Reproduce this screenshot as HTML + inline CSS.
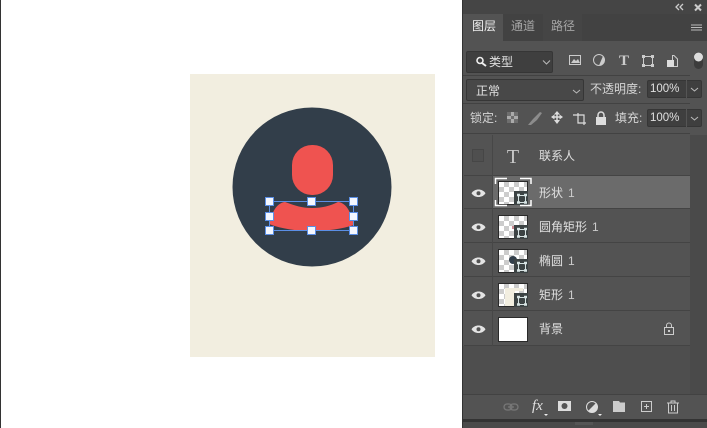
<!DOCTYPE html>
<html><head><meta charset="utf-8">
<style>
html,body{margin:0;padding:0;width:707px;height:428px;overflow:hidden;background:#fff}
body{position:relative;font-family:"Liberation Sans","Noto Sans CJK SC",sans-serif;color:#ddd}
div{position:absolute;box-sizing:border-box}
.t{font-size:12px;line-height:14px;white-space:nowrap;color:#e0e0e0}
.t span{color:#ccc;margin-left:5px}
.box{background:#3f3f3f;border:1px solid #363636;border-radius:2px}
.sep{left:463px;width:227px;height:1px;background:#424242}
.row{left:464px;width:226px;background:#535353;border-bottom:1px solid #444}
.thumb{left:498px;width:30px;height:24px;border:1px solid #2a2a2a;background-color:#fff;background-image:conic-gradient(#ccc 25%,#fff 0 50%,#ccc 0 75%,#fff 0);background-size:10px 10px;overflow:hidden}
.mask{left:514px;width:14px;height:14px;background:#3c4344}
</style></head><body>
<div style="left:0;top:0;width:1px;height:428px;background:#333"></div>
<svg style="position:absolute;left:0;top:0" width="462" height="428">
<rect x="190" y="74" width="245" height="283" fill="#f2eee0"/>
<circle cx="312" cy="187" r="79.500" fill="#323e4a"/>
<rect x="292" y="145" width="41" height="50" rx="20" fill="#ef5350"/>
<path d="M269 224C272 213 276 203 285 202C296 206 302 208 312 208C322 208 330 206 338 202C347 203 351 213 354 225C342 229 327 231 312 231C297 231 282 229 269 224Z" fill="#ef5350"/>
<rect x="269.500" y="201.500" width="84" height="29" fill="none" stroke="#5b8fe6" stroke-width="1"/>
<g fill="#f4f7ff" stroke="#5b8fe6" stroke-width="1">
<rect x="265.500" y="197.500" width="8" height="8"/><rect x="307.500" y="197.500" width="8" height="8"/><rect x="349.500" y="197.500" width="8" height="8"/>
<rect x="265.500" y="212.500" width="8" height="8"/><rect x="349.500" y="212.500" width="8" height="8"/>
<rect x="265.500" y="226.500" width="8" height="8"/><rect x="307.500" y="226.500" width="8" height="8"/><rect x="349.500" y="226.500" width="8" height="8"/>
</g>
</svg>

<!-- panel -->
<div style="left:462px;top:0;width:245px;height:428px;background:#535353;border-left:1px solid #333"></div>
<div style="left:463px;top:0;width:244px;height:14px;background:#454545"></div>
<div style="left:463px;top:14px;width:244px;height:27px;background:#424242"></div>
<div style="left:463px;top:14px;width:40px;height:28px;background:#535353"></div>
<div style="left:543px;top:14px;width:39px;height:27px;background:#454545"></div>
<div class="t" style="left:472px;top:19px;color:#eee">图层</div>
<div class="t" style="left:511px;top:19px;color:#a5a5a5">通道</div>
<div class="t" style="left:551px;top:19px;color:#a5a5a5">路径</div>
<svg style="position:absolute;left:463px;top:0" width="244" height="45">
<g fill="none" stroke="#ccc" stroke-width="1.300"><path d="M216 4L213 7L216 10M220 4L217 7L220 10"/><path d="M232 4.500L238 10.500M238 4.500L232 10.500" stroke-width="2"/></g>
<path d="M228 25H239M228 27.500H239M228 30H239" stroke="#bbb" stroke-width="1"/>
</svg>

<!-- filter row -->
<div class="box" style="left:466px;top:51px;width:87px;height:22px"></div>
<svg style="position:absolute;left:463px;top:45px" width="244" height="35">
<circle cx="17" cy="15.500" r="3" fill="none" stroke="#eee" stroke-width="1.600"/><path d="M19 18L23 21" stroke="#eee" stroke-width="2"/>
<path d="M80 15.500L83.500 19L87 15.500" fill="none" stroke="#bbb"/>
<rect x="106.500" y="10.500" width="11" height="9" fill="none" stroke="#ccc"/><path d="M108 18L111 14L113 16L115 14L117 18Z" fill="#ccc"/>
<circle cx="136" cy="15" r="5.500" fill="#555" stroke="#ccc"/><path d="M136 20.500A5.500 5.500 0 0 0 140 11Z" fill="#ccc"/>
<text x="161" y="20" font-family="Liberation Serif" font-weight="bold" font-size="15" fill="#ccc" text-anchor="middle">T</text>
<rect x="180.500" y="11.500" width="9" height="9" fill="none" stroke="#ccc"/>
<g fill="#ccc"><rect x="179" y="10" width="3" height="3"/><rect x="188" y="10" width="3" height="3"/><rect x="179" y="19" width="3" height="3"/><rect x="188" y="19" width="3" height="3"/></g>
<path d="M209.500 10.500H211L214.500 14V21.500H209.500Z" fill="none" stroke="#ccc"/><rect x="204" y="15" width="7" height="7" fill="#ddd"/>
<rect x="231" y="7" width="9" height="17" rx="4.500" fill="#3c3c3c"/><circle cx="235.500" cy="12" r="4.500" fill="#ddd"/>
</svg>
<div class="t" style="left:489px;top:55px">类型</div>

<div class="sep" style="top:75px"></div>
<!-- blend row -->
<div class="box" style="left:466px;top:79px;width:118px;height:22px;background:#484848"></div>
<div class="t" style="left:476px;top:84px">正常</div>
<div class="t" style="left:590px;top:82px;color:#d5d5d5">不透明度:</div>
<div class="box" style="left:647px;top:80px;width:55px;height:18px"></div>
<div style="left:686px;top:80px;width:1px;height:18px;background:#555"></div>
<div class="t" style="left:650px;top:82px;font-size:11.500px">100%</div>
<div class="sep" style="top:103px"></div>
<!-- lock row -->
<div class="t" style="left:470px;top:111px;color:#d5d5d5">锁定:</div>
<div class="t" style="left:615px;top:111px;color:#d5d5d5">填充:</div>
<div class="box" style="left:647px;top:109px;width:55px;height:18px"></div>
<div style="left:686px;top:109px;width:1px;height:18px;background:#555"></div>
<div class="t" style="left:650px;top:111px;font-size:11.500px">100%</div>
<svg style="position:absolute;left:463px;top:78px" width="244" height="55">
<path d="M110 12L113.500 15L117 12" fill="none" stroke="#bbb"/>
<path d="M228 10L231.500 13L235 10M228 39L231.500 42L235 39" fill="none" stroke="#bbb"/>
<rect x="44" y="34" width="11" height="11" fill="#aaa"/><path d="M44 34h4v4h-4zM51 34h4v4h-4zM48 38h3v3h-3zM44 41h4v4h-4zM51 41h4v4h-4z" fill="#6e6e6e"/>
<path d="M65 47L70 41L77 34L79 35L74 42L68 47Z" fill="#8c8c8c"/>
<path d="M94 35V43M90 39H98" stroke="#ddd" stroke-width="1.500"/>
<path d="M94 33L97 36.500H91ZM94 46L97 42H91ZM88 39L91.500 36.500V41.500ZM100 39L96.500 36.500V41.500Z" fill="#ddd"/>
<path d="M110 37H121V47M115 35V45H123" fill="none" stroke="#ddd" stroke-width="1.200"/>
<rect x="133" y="39" width="10" height="8" fill="#ddd"/><path d="M135 39V37A3 3 0 0 1 141 37V39" fill="none" stroke="#ddd" stroke-width="1.500"/>
</svg>
<div class="sep" style="top:133px"></div>

<!-- layers -->
<div style="left:463px;top:346px;width:244px;height:48px;background:#4e4e4e"></div>
<div style="left:690px;top:135px;width:17px;height:259px;background:#4a4a4a"></div>
<div class="row" style="top:135px;height:41px"></div>
<div class="row" style="top:176px;height:33px"></div>
<div style="left:493px;top:176px;width:197px;height:32px;background:#6b6b6b"></div>
<div class="row" style="top:209px;height:34px"></div>
<div class="row" style="top:243px;height:34px"></div>
<div class="row" style="top:277px;height:34px"></div>
<div class="row" style="top:311px;height:35px"></div>
<div style="left:492px;top:135px;width:1px;height:211px;background:#474747"></div>
<div style="left:472px;top:149px;width:12px;height:13px;border:1px solid #464646;background:#4f4f4f"></div>
<svg style="position:absolute;left:463px;top:135px" width="244" height="211">
<g transform="translate(-0.500,-0.800)">
<path d="M9 59C12 54 20 54 23 59C20 64 12 64 9 59Z" fill="#e4e4e4"/><circle cx="16" cy="59" r="2" fill="#535353"/>
<path d="M9 93C12 88 20 88 23 93C20 98 12 98 9 93Z" fill="#e4e4e4"/><circle cx="16" cy="93" r="2" fill="#535353"/>
<path d="M9 127C12 122 20 122 23 127C20 132 12 132 9 127Z" fill="#e4e4e4"/><circle cx="16" cy="127" r="2" fill="#535353"/>
<path d="M9 161C12 156 20 156 23 161C20 166 12 166 9 161Z" fill="#e4e4e4"/><circle cx="16" cy="161" r="2" fill="#535353"/>
<path d="M9 195C12 190 20 190 23 195C20 200 12 200 9 195Z" fill="#e4e4e4"/><circle cx="16" cy="195" r="2" fill="#535353"/>
</g>
<text x="50" y="28" font-family="Liberation Serif" font-size="20" fill="#c8c8c8" text-anchor="middle">T</text>
</svg>
<div class="t" style="left:539px;top:149px">联系人</div>

<div class="thumb" style="top:181px"></div>
<div class="thumb" style="top:215px"></div>
<div class="thumb" style="top:249px"></div>
<div class="thumb" style="top:283px"></div>
<div class="thumb" style="top:317px;background:#fff;height:25px"></div>
<div style="left:512px;top:226px;width:3px;height:3px;background:#c98a92"></div>
<div style="left:509px;top:256px;width:8px;height:8px;border-radius:50%;background:#323e4a"></div>
<div style="left:505px;top:288px;width:18px;height:3px;background:#f2eee0"></div>
<div style="left:505px;top:288px;width:10px;height:18px;background:#f2eee0"></div>
<div class="mask" style="top:191px"></div>
<div class="mask" style="top:225px"></div>
<div class="mask" style="top:259px"></div>
<div class="mask" style="top:293px"></div>
<svg style="position:absolute;left:514px;top:190px" width="16" height="125" fill="none" stroke="#d8e4e4">
<g id="m"><rect x="4.500" y="5.500" width="7" height="7"/><path d="M3 5h3M10 5h3M3 12.500h3M10 12.500h3" stroke-width="2.500"/></g>
<use href="#m" y="34"/><use href="#m" y="68"/><use href="#m" y="102"/>
</svg>
<svg style="position:absolute;left:493px;top:176px" width="42" height="34" fill="none" stroke="#fff" stroke-width="1.500">
<path d="M14 2.500H2.500V8M27 2.500H38V8M2.500 24V29.500H14M27 29.500H38V24"/>
</svg>
<div class="t" style="left:539px;top:186px">形状<span>1</span></div>
<div class="t" style="left:539px;top:220px">圆角矩形<span>1</span></div>
<div class="t" style="left:539px;top:254px">椭圆<span>1</span></div>
<div class="t" style="left:539px;top:288px">矩形<span>1</span></div>
<div class="t" style="left:539px;top:322px">背景</div>
<svg style="position:absolute;left:662px;top:322px" width="14" height="14" fill="none" stroke="#ccc">
<rect x="2.500" y="5.500" width="9" height="7"/><path d="M4.500 5.500V3.500A2.500 2.500 0 0 1 9.500 3.500V5.500"/><rect x="6" y="8" width="2" height="2" fill="#ccc" stroke="none"/>
</svg>

<!-- bottom -->
<div style="left:463px;top:394px;width:244px;height:1px;background:#424242"></div>
<div style="left:463px;top:419px;width:244px;height:3px;background:#333"></div>
<div style="left:463px;top:422px;width:244px;height:6px;background:#4a4a4a"></div>
<div style="left:575px;top:422px;width:18px;height:3px;background:#555"></div>
<div class="t" style="left:532px;top:399px;font-family:'Liberation Serif',serif;font-style:italic;font-size:15px">fx</div>
<svg style="position:absolute;left:463px;top:395px" width="244" height="24">
<g fill="none" stroke="#777" stroke-width="1.300"><rect x="41" y="9" width="8" height="6" rx="3"/><rect x="47" y="9" width="8" height="6" rx="3"/><path d="M45 12H51"/></g>
<path d="M81 19h4l-2 2z" fill="#eee"/>
<rect x="95" y="6" width="13" height="10" fill="#ddd"/><circle cx="101.500" cy="11" r="3" fill="#555"/>
<circle cx="129" cy="12" r="5.500" fill="#555" stroke="#ddd"/><path d="M125 16A5.500 5.500 0 0 0 133 8Z" fill="#ddd"/>
<path d="M135 19h4l-2 2z" fill="#eee"/>
<path d="M150 6H156L157 7.500H162V17H150Z" fill="#ccc"/>
<rect x="178.500" y="6.500" width="10" height="10" fill="none" stroke="#ccc"/><path d="M183.500 9V14M181 11.500H186" stroke="#ccc"/>
<g fill="none" stroke="#ccc"><path d="M204 8H216M208 8V6H212V8"/><path d="M205.500 8V18H214.500V8M208.500 10V16M211.500 10V16"/></g>
</svg>
</body></html>
